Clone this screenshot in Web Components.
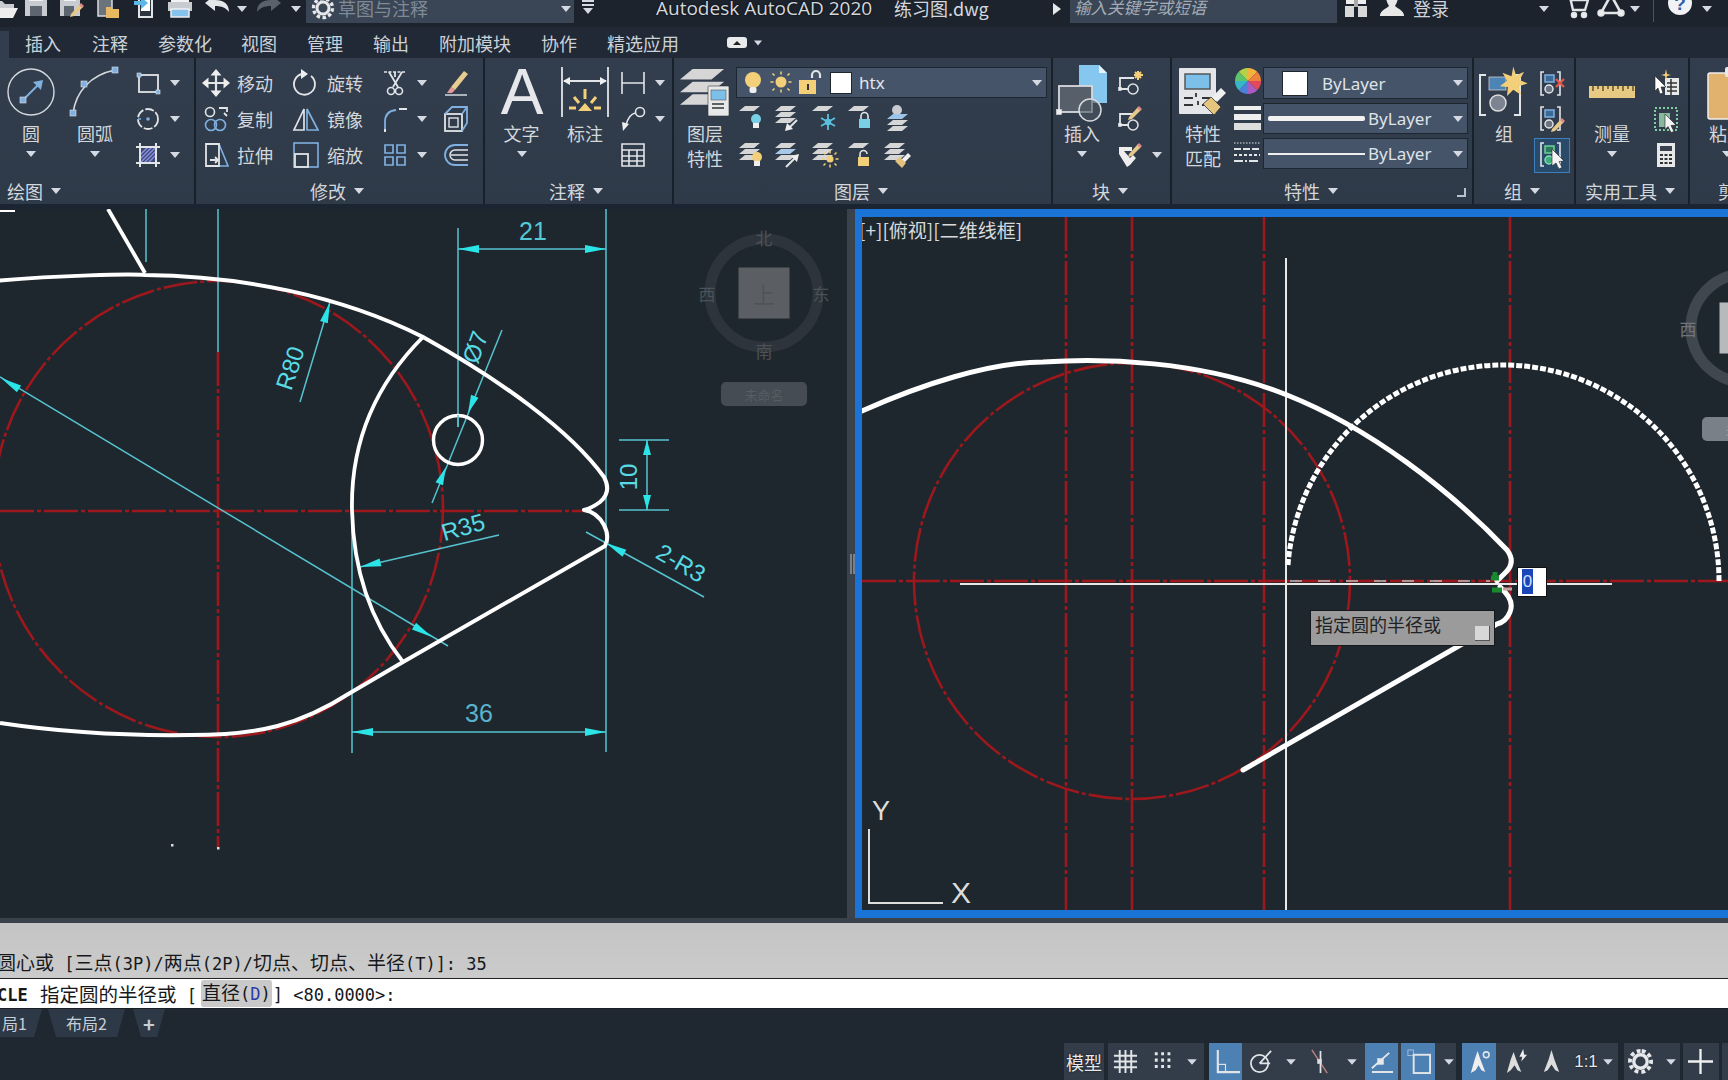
<!DOCTYPE html>
<html lang="zh">
<head>
<meta charset="utf-8">
<title>Autodesk AutoCAD 2020</title>
<style>
  html, body { margin: 0; padding: 0; background: #1f2730; }
  body { width: 1728px; height: 1080px; overflow: hidden; font-family: "Noto Sans CJK SC", "Noto Sans", sans-serif; color: #cfd4da; }
</style>
</head>
<body>
<cad-titlebar></cad-titlebar>
<cad-tabs></cad-tabs>
<cad-ribbon>
  <rb-panel label="绘图" w="194" lx="7">
    <div style="display:flex">
      <rb-big icon="circle" label="圆" caret w="62"></rb-big>
      <rb-big icon="arc" label="圆弧" caret w="66"></rb-big>
      <div style="margin-left:6px;display:grid;grid-auto-rows:36px">
        <rb-small icon="rect" caret></rb-small>
        <rb-small icon="ellipse" caret></rb-small>
        <rb-small icon="hatch" caret></rb-small>
      </div>
    </div>
  </rb-panel>
  <rb-panel label="修改" w="287" lx="114">
    <div style="margin-left:6px;display:grid;grid-template-columns:90px 89px 61px 28px;grid-auto-rows:36px">
      <rb-small icon="move" label="移动"></rb-small>
      <rb-small icon="rotate" label="旋转"></rb-small>
      <rb-small icon="trim" caret></rb-small>
      <rb-small icon="erase"></rb-small>
      <rb-small icon="copy" label="复制"></rb-small>
      <rb-small icon="mirror" label="镜像"></rb-small>
      <rb-small icon="fillet" caret></rb-small>
      <rb-small icon="box"></rb-small>
      <rb-small icon="stretch" label="拉伸"></rb-small>
      <rb-small icon="scale" label="缩放"></rb-small>
      <rb-small icon="array" caret></rb-small>
      <rb-small icon="offset"></rb-small>
    </div>
  </rb-panel>
  <rb-panel label="注释" w="187" lx="64">
    <div style="display:flex">
      <rb-big icon="text" label="文字" caret w="73"></rb-big>
      <rb-big icon="dim" label="标注" w="54"></rb-big>
      <div style="margin-left:7px;display:grid;grid-auto-rows:36px">
        <rb-small icon="dimlin" caret></rb-small>
        <rb-small icon="leader" caret></rb-small>
        <rb-small icon="table"></rb-small>
      </div>
    </div>
  </rb-panel>
  <rb-panel label="图层" w="377" lx="160">
    <div style="display:flex">
      <rb-big icon="layers" label="图层" label2="特性" w="62"></rb-big>
      <div style="width:311px;padding-top:2px">
        <rb-combo h="31">
          <rb-icon name="bulb" style="margin-left:2px"></rb-icon>
          <rb-icon name="sun" style="margin-left:0"></rb-icon>
          <rb-icon name="openlock" style="margin-left:0"></rb-icon>
          <span style="width:20px;height:20px;background:#fff;margin-left:8px;outline:1px solid #20262e"></span>
          <span style="margin-left:8px;font:17px 'Noto Sans',sans-serif;color:#e3e6ea">htx</span>
        </rb-combo>
        <div style="margin:6px 0 0 2px;display:grid;grid-template-columns:repeat(5,28px);column-gap:8.25px;row-gap:9px">
          <rb-icon name="loff"></rb-icon><rb-icon name="liso"></rb-icon><rb-icon name="lfrz"></rb-icon><rb-icon name="llock"></rb-icon><rb-icon name="lwalk"></rb-icon>
          <rb-icon name="lon"></rb-icon><rb-icon name="luniso"></rb-icon><rb-icon name="lthaw"></rb-icon><rb-icon name="lunlock"></rb-icon><rb-icon name="lmerge"></rb-icon>
        </div>
      </div>
    </div>
  </rb-panel>
  <rb-panel label="块" w="117" lx="39">
    <div style="display:flex">
      <rb-big icon="insert" label="插入" caret w="58"></rb-big>
      <div style="margin-left:5px;display:grid;grid-auto-rows:36px">
        <rb-small icon="blkcreate"></rb-small>
        <rb-small icon="blkedit"></rb-small>
        <rb-small icon="attr" caret></rb-small>
      </div>
    </div>
  </rb-panel>
  <rb-panel label="特性" w="300" lx="112" launcher>
    <div style="display:flex">
      <rb-big icon="match" label="特性" label2="匹配" w="62"></rb-big>
      <div style="padding-top:2px;display:grid;grid-template-columns:29px 205px;grid-template-rows:32px 31px 31px;row-gap:4px">
        <rb-icon name="wheel"></rb-icon>
        <rb-combo h="32"><span style="width:24px;height:23px;background:#fff;margin-left:19px;outline:1px solid #20262e"></span><span style="margin-left:15px;font:17px 'Noto Sans',sans-serif;color:#dfe3e8">ByLayer</span></rb-combo>
        <rb-icon name="lweight"></rb-icon>
        <rb-combo h="31"><span style="width:97px;height:5px;background:#f2f2f2;margin-left:4px;border-radius:2px"></span><span style="margin-left:3px;font:17px 'Noto Sans',sans-serif;color:#dfe3e8">ByLayer</span></rb-combo>
        <rb-icon name="ltype"></rb-icon>
        <rb-combo h="31"><span style="width:97px;height:2px;background:#eee;margin-left:4px"></span><span style="margin-left:3px;font:17px 'Noto Sans',sans-serif;color:#dfe3e8">ByLayer</span></rb-combo>
      </div>
    </div>
  </rb-panel>
  <rb-panel label="组" w="100" lx="30">
    <div style="display:flex">
      <rb-big icon="group" label="组" w="60"></rb-big>
      <div style="display:grid;grid-auto-rows:36px;width:36px;justify-items:center;align-items:center">
        <rb-icon name="grpx"></rb-icon>
        <rb-icon name="grpedit"></rb-icon>
        <span style="display:flex;width:34px;height:33px;align-items:center;justify-content:center;background:#294a69;border:1px solid #3e7fbd"><rb-icon name="grpsel"></rb-icon></span>
      </div>
    </div>
  </rb-panel>
  <rb-panel label="实用工具" w="112" lx="9">
    <div style="display:flex">
      <rb-big icon="ruler" label="测量" caret w="72"></rb-big>
      <div style="margin-left:4px;display:grid;grid-auto-rows:36px">
        <rb-small icon="qselect"></rb-small>
        <rb-small icon="selcycle"></rb-small>
        <rb-small icon="calc"></rb-small>
      </div>
    </div>
  </rb-panel>
  <rb-panel label="剪贴板" w="74" lx="28">
    <rb-big icon="clip" label="粘贴" caret w="74"></rb-big>
  </rb-panel>
</cad-ribbon>
<cad-viewports></cad-viewports>
<cad-command></cad-command>
<cad-layouts></cad-layouts>
<cad-status></cad-status>

<script>
// icon table: [viewBox size, markup]. white-ish stroke by default
const BL = '#7fb0e0', YE = '#f3cf7a', LG = '#d6d6d6'
const lay = (y, f = LG, x = 0) => `<path stroke="none" fill="${f}" d="M${x + 7} ${y}h15l-6 5h-15z"/>`
const stack = (y = 2, x = 0) => lay(y, LG, x) + lay(y + 6, LG, x) + lay(y + 12, LG, x)
const bulb = (cx, cy, f, r = 5) => `<circle cx="${cx}" cy="${cy}" r="${r}" fill="${f}" stroke="none"/><rect x="${cx - 3}" y="${cy + r - 1}" width="6" height="5" fill="#eee" stroke="none"/>`
const padlock = (x, y, f, open) => `<path d="M${x + 2} ${y + 6}V${y + 3}a3.5 3.5 0 0 1 7 0${open ? '' : 'V' + (y + 6)}" stroke-width="1.6"/><rect x="${x}" y="${y + 6}" width="11" height="9" fill="${f}" stroke="none"/>`
const sunG = (cx, cy, r, f = YE) => `<circle cx="${cx}" cy="${cy}" r="${r}" fill="${f}" stroke="none"/><path stroke="${f}" stroke-dasharray="3 2" d="M${cx} ${cy - r - 5}v3M${cx} ${cy + r + 2}v3M${cx - r - 5} ${cy}h3M${cx + r + 2} ${cy}h3M${cx - r - 3} ${cy - r - 3}l2 2M${cx + r + 1} ${cy + r + 1}l2 2M${cx + r + 3} ${cy - r - 3}l-2 2M${cx - r - 1} ${cy + r + 1}l-2 2"/>`
const brush = (x, y) => `<path stroke="none" fill="#f1f1f1" d="M${x + 6} ${y + 8}l7-7 3 3-7 7z"/><path stroke="none" fill="#e3c27d" d="M${x} ${y + 9}l5-4 6 6-4 5z"/>`
const pencil = (x, y) => `<path stroke="none" fill="#e6c98a" d="M${x} ${y + 11}l9-10 3 3-9 9-4 1z"/><path stroke="none" fill="#d88" d="M${x + 8} ${y + 2}l2-2 3 3-2 2z"/>`
const sq = (x, y, s = 5, c = BL) => `<rect x="${x - s / 2}" y="${y - s / 2}" width="${s}" height="${s}" fill="${c}" stroke="#dfe3e8" stroke-width=".6"/>`
const wheel = () => {
  const cols = ['#f3b23c', '#f0813a', '#e4495b', '#a85bc0', '#4f7fd8', '#38b6c9', '#5cc46c', '#b8d048']
  let s = ''
  cols.forEach((c, i) => {
    const a = i * Math.PI / 4, b = (i + 1) * Math.PI / 4
    s += `<path stroke="none" fill="${c}" d="M14 14L${14 + 13 * Math.sin(a)} ${14 - 13 * Math.cos(a)}A13 13 0 0 1 ${14 + 13 * Math.sin(b)} ${14 - 13 * Math.cos(b)}z"/>`
  })
  return s
}
const ICONS = {
  // quick access
  open: [26, `<path fill="#c9ccd0" stroke="none" d="M1 6h9l3 3h9v4H7l-4 9H1z"/><path fill="#eee" stroke="none" d="M6 13h20l-5 10H2z"/>`],
  save: [26, `<path fill="#c8ccd0" stroke="none" d="M2 -3h22v24H2z"/><rect x="6" y="-3" width="14" height="9" fill="#f2f2f2" stroke="none"/><rect x="7" y="11" width="12" height="10" fill="#5c6570" stroke="none"/>`],
  saveas: [26, `<path fill="#c8ccd0" stroke="none" d="M1 -3h20v24H1z"/><rect x="5" y="-3" width="12" height="9" fill="#f2f2f2" stroke="none"/><rect x="5" y="11" width="10" height="10" fill="#5c6570" stroke="none"/>${pencil(12, 8)}`],
  publish: [26, `<rect x="4" y="-3" width="14" height="24" fill="#6b737c" stroke="#d9dce0"/><path stroke="none" fill="#e8b960" d="M12 12h5l2 2h6v9H12z"/>`],
  phoneIn: [26, `<rect x="7" y="-3" width="13" height="25" fill="#2c3440" stroke="#e2e5e8" stroke-width="2"/><rect x="9" y="2" width="9" height="14" fill="#fff" stroke="none"/><path stroke="none" fill="#5bb8e8" d="M2 6h7V2l7 6-7 6v-4H2z"/>`],
  printer: [26, `<rect x="4" y="-3" width="18" height="10" fill="#f2f2f2" stroke="none"/><rect x="1" y="7" width="24" height="9" fill="#c8ccd0" stroke="none"/><rect x="4" y="14" width="18" height="8" fill="#86c3ec" stroke="#eee"/>`],
  undo: [26, `<path fill="#e4e6ea" stroke="none" d="M1 8l10-8v5c9 0 14 4 14 12-3-4-7-6-14-6v5z"/>`],
  redo: [26, `<path fill="#59616b" stroke="none" d="M25 8l-10-8v5C6 5 1 9 1 17c3-4 7-6 14-6v5z"/>`],
  gear: [22, `<path stroke="#e6e8eb" stroke-width="3.4" stroke-dasharray="3.4 2.4" d="M11 1.500a9.500 9.500 0 1 0 .01 0"/><circle cx="11" cy="11" r="6" stroke="#e6e8eb" stroke-width="3"/>`],
  binoc: [26, `<rect x="3" y="0" width="8" height="9" fill="#eee" stroke="none"/><rect x="15" y="0" width="8" height="9" fill="#eee" stroke="none"/><rect x="2" y="11" width="9" height="11" fill="#d8d8d8" stroke="none"/><rect x="15" y="11" width="9" height="11" fill="#d8d8d8" stroke="none"/><rect x="11" y="4" width="4" height="8" fill="#aaa" stroke="none"/>`],
  person: [26, `<path fill="#e8e8e8" stroke="none" d="M13 -4a6 6 0 0 1 6 6c0 4-2 7-3 9 3 3 8 4 9 9v1H1v-1c1-5 6-6 9-9-1-2-3-5-3-9a6 6 0 0 1 6-6z"/>`],
  cart: [26, `<path stroke-width="2.4" d="M1 2h5l3 13h12l3-10H7"/><circle cx="10" cy="20" r="2.500" fill="#eee"/><circle cx="20" cy="20" r="2.500" fill="#eee"/>`],
  a360: [26, `<path stroke-width="2.600" d="M13 0L3 18h20z"/><circle cx="13" cy="1" r="3" fill="#eee"/><circle cx="3" cy="18" r="3" fill="#eee"/><circle cx="23" cy="18" r="3" fill="#eee"/>`],
  help: [26, `<circle cx="13" cy="8" r="12" fill="#f0f2f5" stroke="none"/><text x="13" y="15" text-anchor="middle" font-family="Liberation Sans" font-weight="700" font-size="19" fill="#2e5ea8" stroke="none">?</text>`],
  // draw
  circle: [50, `<circle cx="25" cy="25" r="23" stroke="#d5d9de" stroke-width="1.400"/><path stroke="${BL}" stroke-width="2" d="M18 32L33 17"/><path fill="${BL}" stroke="none" d="M37 13l-2 10-8-8z"/>${sq(17, 33, 6)}`],
  arc: [50, `<path stroke="#d5d9de" stroke-width="1.600" d="M3 46C6 25 20 8 45 3"/>${sq(3, 46, 6)}${sq(14, 17, 6)}${sq(45, 3, 6)}`],
  rect: [28, `<rect x="5" y="6" width="19" height="17" stroke-width="1.800"/>${sq(5, 6, 4)}${sq(24, 23, 4)}`],
  ellipse: [28, `<circle cx="14" cy="14" r="10" stroke-dasharray="9 2" stroke-width="1.800"/><circle cx="14" cy="14" r="1.800" fill="${BL}" stroke="none"/><path d="M4 14h3" stroke="${BL}"/>`],
  hatch: [28, `<rect x="6" y="6" width="16" height="16" fill="#3d4a78" stroke="none"/><path stroke="#8a8fe0" stroke-width="1.500" d="M6 14l8-8M6 22L22 6M14 22l8-8M6 18l12-12M10 22l12-12"/><path stroke-width="2" d="M2 6h24M2 22h24M6 2v24M22 2v24"/>`],
  // modify
  move: [28, `<path stroke-width="2.200" d="M14 3v22M3 14h22"/><path fill="#eee" stroke="none" d="M14 0l5.500 6.500h-11zM14 28l5.500-6.500h-11zM0 14l6.500-5.500v11zM28 14l-6.500-5.500v11z"/>`],
  rotate: [28, `<path stroke-width="1.800" d="M19 7A10.500 10.500 0 1 1 10 5"/><path fill="#eee" stroke="none" d="M9 0v10l7-5z"/>`],
  trim: [28, `<path stroke-dasharray="3 1.500" stroke-width="1.600" d="M3 3h22"/><path stroke-width="1.800" d="M8 3l9 15M21 3l-9 15M14 3v5"/><circle cx="10" cy="22" r="3.500" stroke-width="1.600"/><circle cx="18" cy="22" r="3.500" stroke-width="1.600"/>`],
  erase: [28, `<path fill="#e8cc90" stroke="none" d="M9 18L22 2l4 3-13 16z"/><path fill="#e59a9a" stroke="none" d="M9 18l4 3-3 3-5 0z"/><path d="M3 26h22" stroke-width="1.400"/>`],
  copy: [28, `<circle cx="8" cy="7" r="4.500" stroke-width="1.600"/><path stroke-width="1.800" d="M17 3h8v4M22 8l3 3"/><circle cx="9" cy="20" r="5.500" stroke="${BL}" stroke-width="1.600"/><circle cx="18" cy="20" r="5.500" stroke="${BL}" stroke-width="1.600"/>`],
  mirror: [28, `<path stroke-width="1.700" d="M12 4L2 25h10z"/><path stroke="${BL}" stroke-width="1.700" d="M15 4l11 21H15z"/>`],
  fillet: [28, `<path stroke="${BL}" stroke-width="1.800" d="M4 27V17Q4 6 15 5"/><path stroke-width="2" d="M18 4h8M4 24v3"/>`],
  box: [28, `<rect x="3" y="9" width="17" height="17" stroke="#e2e5e8" stroke-width="1.800"/><rect x="7" y="13" width="9" height="9" stroke-width="1.400"/><path stroke="${BL}" stroke-width="1.800" d="M3 9l7-7h15v16l-5 8M20 9l5-7"/>`],
  stretch: [28, `<path stroke="${BL}" stroke-width="1.600" d="M17 3l9 22H15"/><path stroke-width="1.800" d="M4 3h13v22H4z"/><path stroke-width="1.800" d="M8 19h8m-3-3l3 3-3 3"/>`],
  scale: [28, `<rect x="2" y="2" width="24" height="24" stroke="${BL}" stroke-width="1.600"/><rect x="3" y="13" width="13" height="13" stroke-width="1.800"/>`],
  array: [28, `<path stroke="${BL}" stroke-width="1.700" d="M4 4h8v8H4zM16 4h8v8h-8zM4 16h8v8H4zM16 16h8v8h-8z"/>`],
  offset: [28, `<path stroke="${BL}" stroke-width="1.800" d="M26 4H13a10 10 0 0 0 0 20h13"/><path stroke-width="1.500" d="M26 9H13a5 5 0 0 0 0 10h13M9 14h17"/>`],
  // annotate
  text: [50, `<text x="25" y="47" text-anchor="middle" font-family="Liberation Sans" font-size="64" fill="#e5e7ea" stroke="none">A</text>`],
  dim: [50, `<path stroke-width="1.800" d="M2 0v50M48 0v50M4 14h42"/><path fill="#eee" stroke="none" d="M3 14l7-4v8zM47 14l-7-4v8z"/><path stroke="${YE}" stroke-width="3" d="M25 22v10M14 30l5 6M36 30l-5 6M9 41h7M34 41h7"/><path fill="${YE}" stroke="none" d="M18 44l7-8 7 8z"/>`],
  dimlin: [28, `<path stroke-width="1.600" d="M3 3v22M25 3v22M3 14h22"/>`],
  leader: [28, `<circle cx="21" cy="7" r="4.500" stroke-width="1.600"/><path stroke-width="1.600" d="M16.500 8Q10 9 7 20"/><path fill="#eee" stroke="none" d="M3 17l7 2-6 7z"/>`],
  table: [28, `<path stroke-width="1.600" d="M3 3h22v22H3zM3 9h22M3 15h22M3 20h22M10 9v16M18 9v16"/>`],
  // layers
  layers: [50, `<g transform="scale(2.100) translate(-1,-2)">${lay(3)}${lay(9)}${lay(15)}</g><rect x="28" y="19" width="21" height="30" rx="1" fill="#e6e8ea" stroke="#333" stroke-width=".6"/><rect x="31" y="23" width="15" height="10" fill="#7cc0ea" stroke="#555" stroke-width=".6"/><path stroke="#333" stroke-width="1.500" d="M32 37h12M32 41h12"/>`],
  bulb: [28, `<circle cx="14" cy="11" r="8" fill="${YE}" stroke="none"/><rect x="10.500" y="18" width="7" height="6" rx="2" fill="#eee" stroke="none"/>`],
  sun: [28, sunG(14, 13, 5.500)],
  openlock: [28, `<path stroke-width="2.200" d="M17 9V6a4 4 0 0 1 8 0v3"/><rect x="4" y="11" width="17" height="14" fill="${YE}" stroke="none"/><rect x="12" y="15" width="2" height="6" fill="#333" stroke="none"/>`],
  loff: [28, lay(2) + bulb(18, 15, '#79cfe4')],
  liso: [28, stack(2) + `<path stroke-width="2" d="M23 16L14 25"/><path fill="#eee" stroke="none" d="M11 27l2-8 6 6z"/>`],
  lfrz: [28, lay(2) + `<path stroke="#5bc0de" stroke-width="1.800" d="M17 10v16M10 14l14 8M24 14l-14 8"/><circle cx="17" cy="18" r="2.500" stroke="#5bc0de"/>`],
  llock: [28, lay(2) + padlock(12, 9, '#79cfe4')],
  lwalk: [28, `<circle cx="14" cy="6" r="5" fill="#c8ccd0" stroke="none"/>${lay(10, '#9cc4e8', 3)}${lay(16, LG, 3)}${lay(22, LG, 3)}`],
  lon: [28, stack(2) + bulb(19, 16, YE)],
  luniso: [28, `<g>${lay(2)}${lay(8, '#a8c8e8')}${lay(14)}</g><path stroke-width="2" d="M12 26l10-10"/><path fill="#eee" stroke="none" d="M25 13l-2 8-6-6z"/>`],
  lthaw: [28, stack(2) + sunG(19, 18, 3.500)],
  lunlock: [28, lay(2) + padlock(11, 10, YE, true)],
  lmerge: [28, stack(2) + brush(12, 11)],
  // block
  insert: [50, `<path fill="#86c7f0" stroke="none" d="M22 -2h20l8 8v30H22z"/><path fill="#e8f2fa" stroke="none" d="M42 -2l8 8h-8z"/><rect x="2" y="19" width="33" height="26" fill="#565f6a" stroke="#d8dbde" stroke-width="1.800"/>${sq(2, 45, 5, '#eee')}<circle cx="33" cy="43" r="11" fill="#4d5663" fill-opacity=".6" stroke="#d8dbde" stroke-width="1.500"/>`],
  blkcreate: [28, `<path stroke-width="1.800" d="M18 9H4v11M4 20h9"/>${sq(4, 20, 3, '#eee')}<circle cx="17" cy="20" r="5" stroke-width="1.500"/><path stroke="${YE}" stroke-width="2" d="M22 2v9M18 6h9M19 3l6 6M25 3l-6 6"/>`],
  blkedit: [28, `<path stroke-width="1.800" d="M18 9H4v11M4 20h9"/>${sq(4, 20, 3, '#eee')}<circle cx="17" cy="20" r="5" stroke-width="1.500"/>${pencil(13, 1)}`],
  attr: [28, `<path fill="#eee" stroke="none" d="M3 6h13v4l-8 0 6 7 3-3 3 3-6 7-3 2L3 13z"/>${pencil(13, 2)}`],
  // properties
  match: [50, `<rect x="1" y="1" width="37" height="46" rx="1" fill="#e3e5e8" stroke="none"/><rect x="7" y="7" width="25" height="15" fill="#7cc0ea" stroke="#555"/><path stroke="#333" stroke-width="1.800" d="M6 31h9M24 31h8M6 38h9M24 38h8M18 26v4M20 34v4"/><path fill="#f0f0f0" stroke="none" d="M34 30l9-9 5 5-9 9z"/><path fill="#e6c57f" stroke="#333" stroke-width=".8" d="M25 37l8-7 10 10-7 8z"/>`],
  wheel: [28, wheel()],
  lweight: [28, `<rect x="0" y="3" width="27" height="4" fill="#eee" stroke="none"/><rect x="0" y="11" width="27" height="6" fill="#eee" stroke="none"/><rect x="0" y="20" width="27" height="7" fill="#ddd" stroke="none"/>`],
  ltype: [28, `<path stroke-width="1.200" stroke-dasharray="1.500 1.500" d="M0 5h26"/><path stroke-width="2" stroke-dasharray="7 2" d="M0 11h26"/><path stroke-width="2" stroke-dasharray="3 2" d="M0 17h26"/><path stroke-width="2" stroke-dasharray="9 2 2 2" d="M0 23h26"/>`],
  // groups
  group: [50, `<path stroke-width="2" d="M7 10H1v40h6M35 10h6v40h-6" transform="translate(0,-2)"/><rect x="10" y="10" width="17" height="13" fill="#4d84b8" stroke="#ccc" stroke-width=".8"/><circle cx="19" cy="36" r="8" fill="#7b8490" stroke="#ddd"/><path fill="${YE}" stroke="none" d="M37 -4l3 10 9-4-5 9 9 4-10 3 3 10-9-6-7 7 1-10-9-1 8-6-5-9 10 4z" transform="translate(1,3) scale(.9)"/>`],
  grpx: [28, `<path stroke-width="1.600" d="M6 3H3v23h3M19 3h3v23h-3"/><rect x="7" y="6" width="9" height="7" stroke="${BL}" fill="#3c6a96"/><circle cx="11" cy="20" r="4" fill="#6b7480"/><path stroke="#e2574c" stroke-width="2.400" d="M18 10l8 8M26 10l-8 8"/>`],
  grpedit: [28, `<path stroke-width="1.600" d="M6 2H3v23h3M19 2h3v23h-3"/><rect x="7" y="5" width="9" height="7" stroke="${BL}" fill="#3c6a96"/><circle cx="11" cy="19" r="4" fill="#6b7480"/>${pencil(14, 13)}`],
  grpsel: [28, `<path stroke-width="1.600" d="M6 2H3v23h3M19 2h3v23h-3"/><rect x="7" y="5" width="9" height="7" stroke="#6fcf9a" fill="#2a7a5c"/><circle cx="11" cy="19" r="4" fill="#3fae7c" stroke="#7fe0b0"/><path fill="#f4f4f4" stroke="#222" stroke-width=".6" d="M14 8l12 12-5 .5 3 6-3 1.500-3-6-4 3z"/>`],
  // utilities
  ruler: [50, `<rect x="2" y="19" width="46" height="12" fill="#e7c983" stroke="none"/><path stroke="#5a4a22" stroke-width="1.400" d="M6 19v5M11 19v3M16 19v5M21 19v3M26 19v5M31 19v3M36 19v5M41 19v3M46 19v5"/>`],
  qselect: [28, `<rect x="13" y="9" width="14" height="17" fill="#e6e8ea" stroke="none"/><path stroke="#333" d="M15 14h10M15 18h10M15 22h10M19 10v16"/><path fill="#fff" stroke="#222" stroke-width=".6" d="M3 7l11 11-5 0 2 6-3 1-2-6-3 3z"/><path fill="${YE}" stroke="none" d="M14 0l1 5 4 1-4 1-1 5-1-5-4-1 4-1z"/>`],
  selcycle: [28, `<rect x="3" y="3" width="22" height="22" stroke="#7fd0a0" stroke-width="2" stroke-dasharray="2 2"/><path fill="#87b89c" stroke="none" d="M7 8h11v14H7z"/><path fill="#f4f4f4" stroke="#222" stroke-width=".6" d="M13 9l11 11-5 .5 3 6-3 1-3-6-3 3z"/>`],
  calc: [28, `<rect x="5" y="2" width="18" height="24" fill="#e6e8ea" stroke="none"/><rect x="8" y="5" width="12" height="5" fill="#39424e" stroke="none"/><path stroke="#333" stroke-width="2.200" stroke-dasharray="3 1.500" d="M8 14h12M8 18h12M8 22h12"/>`],
  clip: [50, `<rect x="6" y="6" width="60" height="46" rx="2" fill="#e0b26e" stroke="#eee"/><rect x="23" y="0" width="26" height="10" rx="2" fill="#e8e8e8" stroke="none"/>`],
  // status bar
  grid: [26, `<path stroke-width="2" d="M7 1v24M13 1v24M19 1v24M1 7h24M1 13h24M1 19h24"/>`],
  snap: [26, `<path stroke-width="3.200" stroke-dasharray="3 3.600" d="M5 5h18M5 11.600h18M5 18.200h18"/>`],
  ortho: [26, `<path stroke-width="2.200" d="M5 1v23h23"/><rect x="5" y="16" width="8" height="8" stroke-width="1.200"/>`],
  polar: [26, `<circle cx="11" cy="15" r="9" stroke-width="1.800"/><path stroke-width="1.800" d="M11 15L23 2M11 15h11"/>`],
  iso: [26, `<path stroke="#c08080" stroke-width="1.500" d="M4 1l16 24"/><path stroke-width="1.800" d="M13 2v23"/>${sq(12, 13, 4, '#ddd')}`],
  track: [26, `<path stroke-width="2" d="M3 20L21 4M3 24h22"/>${sq(12, 13, 6, '#e8e8e8')}`],
  osnap: [26, `<rect x="8" y="6" width="17" height="19" stroke-width="2"/>${sq(5, 4, 6, 'none')}`],
  anno: [26, `<path fill="#eee" stroke="none" d="M11 2l3 9 5 13-4-2-3-5-3 5-5 3 4-14z"/><circle cx="20" cy="6" r="3" stroke-width="1.600"/>`],
  anno2: [26, `<path fill="#ddd" stroke="none" d="M10 3l3 9 5 12-4-2-3-5-4 5-4 3 4-14z"/><path fill="#eee" stroke="none" d="M20 0l1 6h3l-6 7 1-5h-3z"/>`],
  anno3: [26, `<path fill="#ddd" stroke="none" d="M13 1l3 10 5 13-4-2-4-6-4 6-4 2 5-13z"/>`],
  sgear: [26, `<path stroke="#e6e8eb" stroke-width="4" stroke-dasharray="4 3" d="M13 2a11 11 0 1 0 .01 0"/><circle cx="13" cy="13" r="7" stroke="#e6e8eb" stroke-width="3.500"/>`],
  plus: [26, `<path stroke="#f0f0f0" stroke-width="2.400" d="M13 0v26M0 13h26"/>`]
}

class RbIcon extends HTMLElement {
  connectedCallback() {
    const [box, body] = ICONS[this.getAttribute("name")]
    const size = this.getAttribute("size") || box
    const root = this.attachShadow({ mode: "open" })
    root.innerHTML = `
      <style>:host { display: block; width: ${size}px; height: ${size}px; } svg { display: block; overflow: visible; }</style>
      <svg width="${size}" height="${size}" viewBox="0 0 ${box} ${box}" fill="none" stroke="#e2e5e8" stroke-width="1.500">${body}</svg>`
  }
}

class RbCaret extends HTMLElement {
  constructor() {
    super()
    this.attachShadow({ mode: "open" }).innerHTML = `
      <style>:host { display: block; flex: none; width: 0; height: 0; border-left: 5px solid transparent; border-right: 5px solid transparent; border-top: 6px solid #d5dae2; }</style>`
  }
}

class RbSmall extends HTMLElement {
  connectedCallback() {
    const label = this.getAttribute("label")
    this.attachShadow({ mode: "open" }).innerHTML = `
      <style>
        :host { display: flex; align-items: center; height: 36px; }
        span { margin-left: 7px; font-size: 18px; white-space: nowrap; color: #d2d7dc; }
        rb-caret { margin-left: 8px; }
      </style>
      <rb-icon name="${this.getAttribute("icon")}"></rb-icon>
      ${label ? `<span>${label}</span>` : ""}
      ${this.hasAttribute("caret") ? "<rb-caret></rb-caret>" : ""}`
  }
}

class RbBig extends HTMLElement {
  connectedCallback() {
    const label2 = this.getAttribute("label2")
    this.attachShadow({ mode: "open" }).innerHTML = `
      <style>
        :host { display: flex; flex-direction: column; align-items: center; flex: none; width: ${this.getAttribute("w")}px; }
        rb-icon { margin-top: 2px; }
        div { margin-top: 4px; font-size: 18px; line-height: 25px; height: 25px; white-space: nowrap; color: #d2d7dc; }
        div + div { margin-top: 0; }
        rb-caret { margin-top: 5px; }
      </style>
      <rb-icon name="${this.getAttribute("icon")}"></rb-icon>
      <div>${this.getAttribute("label")}</div>
      ${label2 ? `<div>${label2}</div>` : ""}
      ${this.hasAttribute("caret") ? "<rb-caret></rb-caret>" : ""}`
  }
}

class RbCombo extends HTMLElement {
  connectedCallback() {
    this.attachShadow({ mode: "open" }).innerHTML = `
      <style>
        :host { display: flex; align-items: center; box-sizing: border-box; height: ${this.getAttribute("h")}px; background: #46546a; border: 1px solid #1d2631; overflow: hidden; }
        rb-caret { margin-left: auto; margin-right: 4px; }
      </style>
      <slot></slot><rb-caret></rb-caret>`
  }
}

class RbPanel extends HTMLElement {
  connectedCallback() {
    this.attachShadow({ mode: "open" }).innerHTML = `
      <style>
        :host { display: flex; flex-direction: column; flex: none; width: ${this.getAttribute("w")}px; height: 146px; background: linear-gradient(#323d4d, #2f3a49); overflow: hidden; position: relative; }
        .body { height: 113px; padding-top: 7px; flex: none; }
        .foot { display: flex; align-items: center; height: 25px; padding-left: ${this.getAttribute("lx")}px; font-size: 18px; white-space: nowrap; color: #d2d7dc; }
        rb-caret { margin-left: 8px; }
        .launch { position: absolute; right: 6px; bottom: 7px; width: 9px; height: 9px; border-right: 2px solid #b8c2cc; border-bottom: 2px solid #b8c2cc; box-sizing: border-box; }
      </style>
      <div class="body"><slot></slot></div>
      <div class="foot"><span>${this.getAttribute("label")}</span><rb-caret></rb-caret></div>
      ${this.hasAttribute("launcher") ? '<div class="launch"></div>' : ""}`
  }
}

class CadRibbon extends HTMLElement {
  constructor() {
    super()
    this.attachShadow({ mode: "open" }).innerHTML = `
      <style>
        :host { display: flex; column-gap: 2px; height: 146px; background: #18202a; border-bottom: 5px solid #1b2532; overflow: hidden; }
      </style>
      <slot></slot>`
  }
}

class CadTitlebar extends HTMLElement {
  constructor() {
    super()
    const ic = (n, ml) => `<rb-icon name="${n}" style="margin-left:${ml}px"></rb-icon>`
    const ca = (ml) => `<rb-caret style="margin-left:${ml}px;margin-top:6px"></rb-caret>`
    this.attachShadow({ mode: "open" }).innerHTML = `
      <style>
        :host { display: flex; align-items: flex-start; height: 27px; background: #1c232d; overflow: hidden; white-space: nowrap; }
        rb-icon { margin-top: -5px; flex: none; }
        .box { flex: none; display: flex; align-items: flex-start; height: 23px; background: #3a4555; }
        .title { flex: none; font: 19px/16px "Open Sans", "Noto Sans CJK SC", sans-serif; color: #d4d8dd; text-shadow: 0 0 2px #000; }
        .cn { font: 18px/16px "Noto Sans CJK SC", sans-serif; color: #d4d8dd; }
        .ws { margin-left: 5px; width: 268px; font-size: 18px; line-height: 16px; color: #7f8a97; }
        .search { margin-left: 9px; width: 267px; font-size: 16.500px; line-height: 14px; font-style: italic; color: #a3acb6; padding-left: 4px; box-sizing: border-box; }
        .menu { margin-left: 8px; width: 12px; flex: none; }
        .menu i { display: block; height: 2px; background: #d5dae2; margin-bottom: 2px; }
        .tri { margin-left: 0; flex: none; width: 0; height: 0; margin-top: 3px; border-top: 6px solid transparent; border-bottom: 6px solid transparent; border-left: 8px solid #e6e8ea; }
        .sep { flex: none; margin-left: 13px; width: 1px; height: 22px; background: #4a5460; }
      </style>
      ${ic("open", -8)}${ic("save", 5)}${ic("saveas", 10)}${ic("publish", 9)}${ic("phoneIn", 12)}${ic("printer", 9)}${ic("undo", 11)}${ca(7)}${ic("redo", 9)}${ca(9)}
      <div class="box ws"><rb-icon name="gear" style="margin:-3px 0 0 6px"></rb-icon><span style="margin-left:4px">草图与注释</span><rb-caret style="margin:6px 3px 0 auto"></rb-caret></div>
      <div class="menu"><i></i><i></i><rb-caret style="margin-left:1px"></rb-caret></div>
      <div class="title" style="margin-left:62px;width:238px">Autodesk AutoCAD 2020</div>
      <div class="cn" style="width:159px">练习图.dwg</div>
      <div class="tri"></div>
      <div class="box search">输入关键字或短语</div>
      ${ic("binoc", 6)}${ic("person", 10)}
      <div class="cn" style="margin-left:8px;width:124px;color:#d0d4d9">登录</div>
      ${ca(2)}${ic("cart", 15)}${ic("a360", 8)}${ca(6)}
      <div class="sep"></div>${ic("help", 13)}${ca(9)}`
  }
}

class CadTabs extends HTMLElement {
  constructor() {
    super()
    const tabs = [["插入", 16], ["注释", 31], ["参数化", 30], ["视图", 29], ["管理", 30], ["输出", 30], ["附加模块", 30], ["协作", 30], ["精选应用", 30]]
    this.attachShadow({ mode: "open" }).innerHTML = `
      <style>
        :host { display: flex; align-items: center; height: 31px; background: #202935; color: #ccd1d7; font-size: 18px; white-space: nowrap; }
        .active { align-self: flex-end; width: 9px; height: 27px; background: #323d4d; flex: none; }
        .pill { margin-left: 48px; width: 20px; height: 11px; border-radius: 3px; background: #e8eaec; display: flex; align-items: center; justify-content: center; }
        .pill i { display: block; width: 0; height: 0; border-left: 4px solid transparent; border-right: 4px solid transparent; border-bottom: 4px solid #222; }
        rb-caret { margin-left: 6px; transform: scale(.8); }
      </style>
      <div class="active"></div>
      ${tabs.map(([t, m]) => `<span style="margin-left:${m}px">${t}</span>`).join("")}
      <div class="pill"><i></i></div><rb-caret></rb-caret>`
  }
}

class ViewCube extends HTMLElement {
  connectedCallback() {
    const lit = this.hasAttribute("lit")
    const ring = lit ? "#40474e" : "#2d343b", lab = lit ? "#6f757b" : "#4b5258", face = lit ? "#b6babd" : "#5b5f63"
    const btn = lit ? "#7a8087" : "#454c53", btnT = lit ? "#989da3" : "#565d64"
    const t = (x, y, s, c, fs = 17) => `<text x="${x}" y="${y}" text-anchor="middle" dominant-baseline="central" font-size="${fs}" fill="${c}">${s}</text>`
    this.attachShadow({ mode: "open" }).innerHTML = `
      <style>:host { position: absolute; width: 140px; height: 190px; font-family: "Noto Sans CJK SC", sans-serif; } svg { display: block; }</style>
      <svg width="140" height="190" viewBox="-70 -70 140 190">
        <circle r="54" fill="none" stroke="${ring}" stroke-width="11"/>
        ${t(0, -56, "北", lab)}${t(0, 57, "南", lab)}${t(-57, 0, "西", lab)}${t(57, 0, "东", lab)}
        <rect x="-26" y="-26" width="52" height="52" fill="${face}" stroke="#23292f"/>
        ${t(0, 0, "上", lit ? "#8a8f94" : "#505458", 22)}
        <rect x="-43" y="89" width="86" height="24" rx="5" fill="${btn}"/>
        ${t(0, 101, "未命名", btnT, 13)}
      </svg>`
  }
}

// arrow head with its tip at x,y pointing at the given angle in degrees
const head = (x, y, a, len = 21, w = 4) => `<polygon points="0,0 ${-len},${-w} ${-len},${w}" transform="translate(${x} ${y}) rotate(${a})" fill="#2be4e8"/>`
const dir = (x1, y1, x2, y2) => Math.atan2(y2 - y1, x2 - x1) * 180 / Math.PI
const CENTER = 'fill="none" stroke="#9c181c" stroke-width="2.600" stroke-dasharray="34 3 4 3"'
const DIM = 'fill="none" stroke="#55c3cf" stroke-width="1.500"'
const dimText = (x, y, s, rot = 0, size = 24, fill = "#58dbe4") => `<text x="${x}" y="${y}" transform="rotate(${rot} ${x} ${y})" text-anchor="middle" dominant-baseline="central" font-family="Liberation Sans" font-size="${size}" fill="${fill}">${s}</text>`

class LeftView extends HTMLElement {
  constructor() {
    super()
    this.attachShadow({ mode: "open" }).innerHTML = `
      <style>:host { display: block; position: relative; flex: none; width: 847px; height: 709px; background: #1f272e; overflow: hidden; } svg { display: block; } view-cube { left: 694px; top: 14px; }</style>
      <svg width="847" height="709" viewBox="0 209 847 709">
        <path ${CENTER} d="M0 511H584M218 352V848"/>
        <ellipse ${CENTER} cx="218" cy="509" rx="225" ry="228" stroke-width="2"/>
        <path ${DIM} stroke="#5ac6d2" stroke-width="2" d="M146 209V262M218 209V352M606 209V427"/>
        <path ${DIM} d="M458 228V427M606 427V752M352 523V753"/>
        <path ${DIM} d="M458 249H606M619 440H669M619 510H669M647 440V510M352 732H606"/>
        <path ${DIM} d="M300 402L330 302M502 330L432 503M499 535L360 567M704 597L586 532M448 646L0 377"/>
        <path fill="none" stroke="#fff" stroke-width="4" stroke-linejoin="round" d="M-5 281C60 275 130 274 145 275C240 276 340 295 423 337C500 380 570 430 604 477Q612 492 600 502Q592 508 584 510Q597 512 604 525Q610 537 605 546L403 662L350 693C300 725 260 735 190 735C120 736 60 732 0 723"/>
        <path fill="none" stroke="#fff" stroke-width="3.800" d="M423 337Q350 410 352 510Q354 600 403 662M108 209L145 273"/>
        <path stroke="#fff" stroke-width="2" d="M0 211H15"/>
        <circle cx="458" cy="440" r="24.500" fill="none" stroke="#fff" stroke-width="3.400"/>
        <path stroke="#55c3cf" stroke-width="1.500" d="M458 415V427"/>
        ${head(458, 249, 180)}${head(606, 249, 0)}${head(647, 440, -90, 15)}${head(647, 510, 90, 15)}
        ${head(352, 732, 180)}${head(606, 732, 0)}
        ${head(330, 302, dir(300, 402, 330, 302))}
        ${head(468, 413, dir(502, 330, 432, 503), 18)}${head(446, 467, dir(432, 503, 502, 330), 18)}
        ${head(360, 567, dir(499, 535, 360, 567))}${head(606, 543, dir(704, 597, 586, 532))}
        ${head(1, 378, dir(448, 646, 0, 377))}${head(432, 637, dir(0, 377, 448, 646))}
        ${dimText(533, 231, "21", 0, 25, "#55c8d4")}
        ${dimText(479, 713, "36", 0, 25, "#5ab3cc")}
        ${dimText(628, 477, "10", -90)}
        ${dimText(290, 368, "R80", -72)}
        ${dimText(475, 347, "Ø7", -70)}
        ${dimText(463, 527, "R35", -16)}
        ${dimText(681, 563, "2-R3", 30)}
        <rect x="171" y="844" width="2.500" height="2.500" fill="#ddd"/><rect x="217" y="847" width="2.500" height="2.500" fill="#ddd"/>
      </svg>
      <view-cube></view-cube>`
  }
}

class RightView extends HTMLElement {
  constructor() {
    super()
    this.attachShadow({ mode: "open" }).innerHTML = `
      <style>
        :host { display: block; position: relative; flex: none; width: 873px; height: 709px; box-sizing: border-box; background: #1f272e; border-style: solid; border-color: #1a74d8; border-width: 8px 0 8px 7px; overflow: hidden; }
        svg { display: block; }
        view-cube { left: 813px; top: 41px; }
        .label { position: absolute; left: -3px; top: 2px; font-size: 19px; line-height: 22px; color: #d8dadc; white-space: nowrap; }
        .tip { position: absolute; left: 448px; top: 393px; box-sizing: border-box; width: 185px; height: 36px; background: #9b9b9b; border: 1px solid #15191d; display: flex; align-items: center; padding: 0 0 8px 4px; font-size: 18px; color: #1f2225; }
        .tip i { position: absolute; right: 4px; bottom: 4px; width: 14px; height: 14px; background: #d8d8d8; border-right: 1px solid #555; border-bottom: 1px solid #555; }
        .input { position: absolute; left: 655px; top: 350px; box-sizing: border-box; width: 30px; height: 30px; background: #fff; border: 1px solid #111; padding: 1px 0 0 4px; }
        .input span { display: block; width: 11px; height: 25px; background: #1b46b8; color: #cfe0ff; font: 17px/25px "Liberation Sans", sans-serif; text-align: center; }
      </style>
      <svg width="866" height="693" viewBox="862 217 866 693">
        <path ${CENTER} stroke="#b01a1e" stroke-width="3" d="M1066 217V910M1132 217V910M1264 217V910M1510 217V910M862 581H1728"/>
        <circle ${CENTER} stroke="#a0181c" stroke-width="2.200" cx="1132" cy="581" r="218"/>
        <path fill="none" stroke="#bbb" stroke-width="1.500" stroke-dasharray="12 16" d="M1290 581H1490"/>
        <path fill="none" stroke="#e8e8e8" stroke-width="2" d="M1286 258V910M960 584H1612"/>
        <path fill="none" stroke="#fff" stroke-width="5" stroke-linecap="round" stroke-linejoin="round" d="M862 411C920 385 990 362 1043 362C1100 358 1200 360 1287 395C1370 428 1450 490 1507 550Q1516 562 1506 572Q1500 578 1497 581M1500 587Q1515 600 1510 612Q1506 622 1497 624L1243 770"/>
        <path fill="none" stroke="#fff" stroke-width="5" stroke-dasharray="6 2" d="M1288 565A216 216 0 0 1 1503.500 365A216 216 0 0 1 1719 582"/>
        <path stroke="#1a8a2e" stroke-width="5" d="M1491 578H1499M1495 572V580M1492 590H1502"/>
        <path stroke="#c8a0a0" stroke-width="3" d="M1503 589H1512"/>
        <path fill="none" stroke="#ddd" stroke-width="2" d="M869 829V903H943"/>
        <text x="881" y="811" text-anchor="middle" dominant-baseline="central" font-family="Liberation Sans" font-size="27" fill="#dcdcdc">Y</text>
        <text x="961" y="892" text-anchor="middle" dominant-baseline="central" font-family="Liberation Sans" font-size="30" fill="#dcdcdc">X</text>
      </svg>
      <div class="label">[+][俯视][二维线框]</div>
      <view-cube lit></view-cube>
      <div class="tip">指定圆的半径或<i></i></div>
      <div class="input"><span>0</span></div>`
  }
}

class CadViewports extends HTMLElement {
  constructor() {
    super()
    this.attachShadow({ mode: "open" }).innerHTML = `
      <style>
        :host { display: flex; height: 714px; background: #39424a; border-bottom: 0; }
        .wrap { display: flex; height: 709px; }
        .gutter { flex: none; width: 8px; background: #3a434b; display: flex; flex-direction: column; align-items: center; justify-content: center; }
        .gutter i { display: block; width: 2px; height: 20px; background: #798089; box-shadow: 3px 0 #798089; }
      </style>
      <div class="wrap"><left-view></left-view><div class="gutter"><i></i></div><right-view></right-view></div>`
  }
}

class CadCommand extends HTMLElement {
  constructor() {
    super()
    const c = (s) => `<b>${s}</b>`
    this.attachShadow({ mode: "open" }).innerHTML = `
      <style>
        :host { display: block; height: 86px; font: 17px/24px "DejaVu Sans Mono", monospace; color: #16181a; overflow: hidden; }
        b { font: 400 19px/24px "Noto Sans CJK SC", sans-serif; }
        .hist { box-sizing: border-box; height: 56px; background: linear-gradient(#c4c4c4, #cbcbcb); border-bottom: 1px solid #222; padding: 27px 0 0 0; white-space: pre; }
        .hist span { margin-left: -3px; }
        .line { box-sizing: border-box; height: 30px; background: #fff; border-bottom: 1px solid #1a1f25; display: flex; align-items: center; white-space: pre; padding-top: 3px; }
        .line .t { margin-left: -3px; }
        .line .gap { margin-left: 2px; }
        .line .w { font-size: 19.500px; }
        .hl { background: #c9c9c9; border-radius: 3px; height: 27px; line-height: 27px; margin: -4px 1px 0 4px; padding: 0 1px; }
        .hl em { font-style: normal; color: #2c3da8; }
      </style>
      <div class="hist"><span>${c("圆心或")} [${c("三点")}(3P)/${c("两点")}(2P)/${c("切点、切点、半径")}(T)]: 35</span></div>
      <div class="line"><span class="t" style="font-weight:700">CLE</span><span class="gap"> <b class="w">指定圆的半径或</b> [</span><span class="hl">${c("直径")}(<em>D</em>)</span><span>] &lt;80.0000&gt;:</span></div>`
  }
}

class CadLayouts extends HTMLElement {
  constructor() {
    super()
    this.attachShadow({ mode: "open" }).innerHTML = `
      <style>
        :host { display: flex; height: 31px; background: #1f2730; font-size: 16px; color: #c8ced4; }
        div { flex: none; height: 28px; background: #2e3947; display: flex; align-items: center; clip-path: polygon(0 0, 100% 0, calc(100% - 8px) 100%, 8px 100%); }
        .a { width: 42px; padding-left: 2px; box-sizing: border-box; margin-left: 0; clip-path: polygon(0 0, 100% 0, calc(100% - 8px) 100%, 0 100%); }
        .b { width: 77px; margin-left: 6px; justify-content: center; }
        .c { width: 32px; margin-left: 8px; justify-content: center; font-size: 20px; font-weight: 700; }
      </style>
      <div class="a">局1</div><div class="b">布局2</div><div class="c">+</div>`
  }
}

class CadStatus extends HTMLElement {
  constructor() {
    super()
    const ic = (n, ml = 0) => `<rb-icon name="${n}" size="25" style="margin-left:${ml}px"></rb-icon>`
    const on = (n, w, ml = 0) => `<span class="on" style="width:${w}px;margin-left:${ml}px"><rb-icon name="${n}" size="25"></rb-icon></span>`
    const ca = (ml) => `<rb-caret style="margin-left:${ml}px"></rb-caret>`
    this.attachShadow({ mode: "open" }).innerHTML = `
      <style>
        :host { display: flex; height: 37px; padding: 3px 0 0 1064px; background: #1f2730; }
        .g { flex: none; display: flex; align-items: center; height: 37px; background: #333d4a; box-sizing: border-box; }
        .on { flex: none; display: flex; align-items: center; justify-content: center; height: 37px; background: #4d81b3; }
        rb-caret { transform: scale(.95); }
        .t { font-size: 18px; color: #e8e8e8; text-shadow: 0 0 2px #000; }
      </style>
      <div class="g" style="width:40px;justify-content:center"><span class="t">模型</span></div>
      <div class="g" style="width:96px;margin-left:4px;padding-left:4.500px">${ic("grid")}${ic("snap", 12)}${ca(12)}</div>
      <div class="g" style="width:247px;margin-left:5px">${on("ortho", 33)}${ic("polar", 6.500)}${ca(12)}${ic("iso", 12)}${ca(14)}${on("track", 33, 8.500)}${on("osnap", 34, 3)}${ca(8.500)}</div>
      <div class="g" style="width:156px;margin-left:6px">${on("anno", 34)}${ic("anno2", 7.500)}${ic("anno3", 10)}<span class="t" style="width:24px;margin-left:10.500px;font-family:'Liberation Sans';font-size:17px;text-align:center">1:1</span>${ca(4.500)}</div>
      <div class="g" style="width:56px;margin-left:6px;padding-left:3.500px">${ic("sgear")}${ca(13)}</div>
      <div class="g" style="width:36px;margin-left:3px;padding-left:4.500px">${ic("plus")}</div>
      <div class="g" style="width:6px;margin-left:3px"></div>`
  }
}

customElements.define("rb-icon", RbIcon)
customElements.define("rb-caret", RbCaret)
customElements.define("rb-small", RbSmall)
customElements.define("rb-big", RbBig)
customElements.define("rb-combo", RbCombo)
customElements.define("rb-panel", RbPanel)
customElements.define("cad-ribbon", CadRibbon)
customElements.define("cad-titlebar", CadTitlebar)
customElements.define("cad-tabs", CadTabs)
customElements.define("view-cube", ViewCube)
customElements.define("left-view", LeftView)
customElements.define("right-view", RightView)
customElements.define("cad-viewports", CadViewports)
customElements.define("cad-command", CadCommand)
customElements.define("cad-layouts", CadLayouts)
customElements.define("cad-status", CadStatus)
</script>
</body>
</html>
